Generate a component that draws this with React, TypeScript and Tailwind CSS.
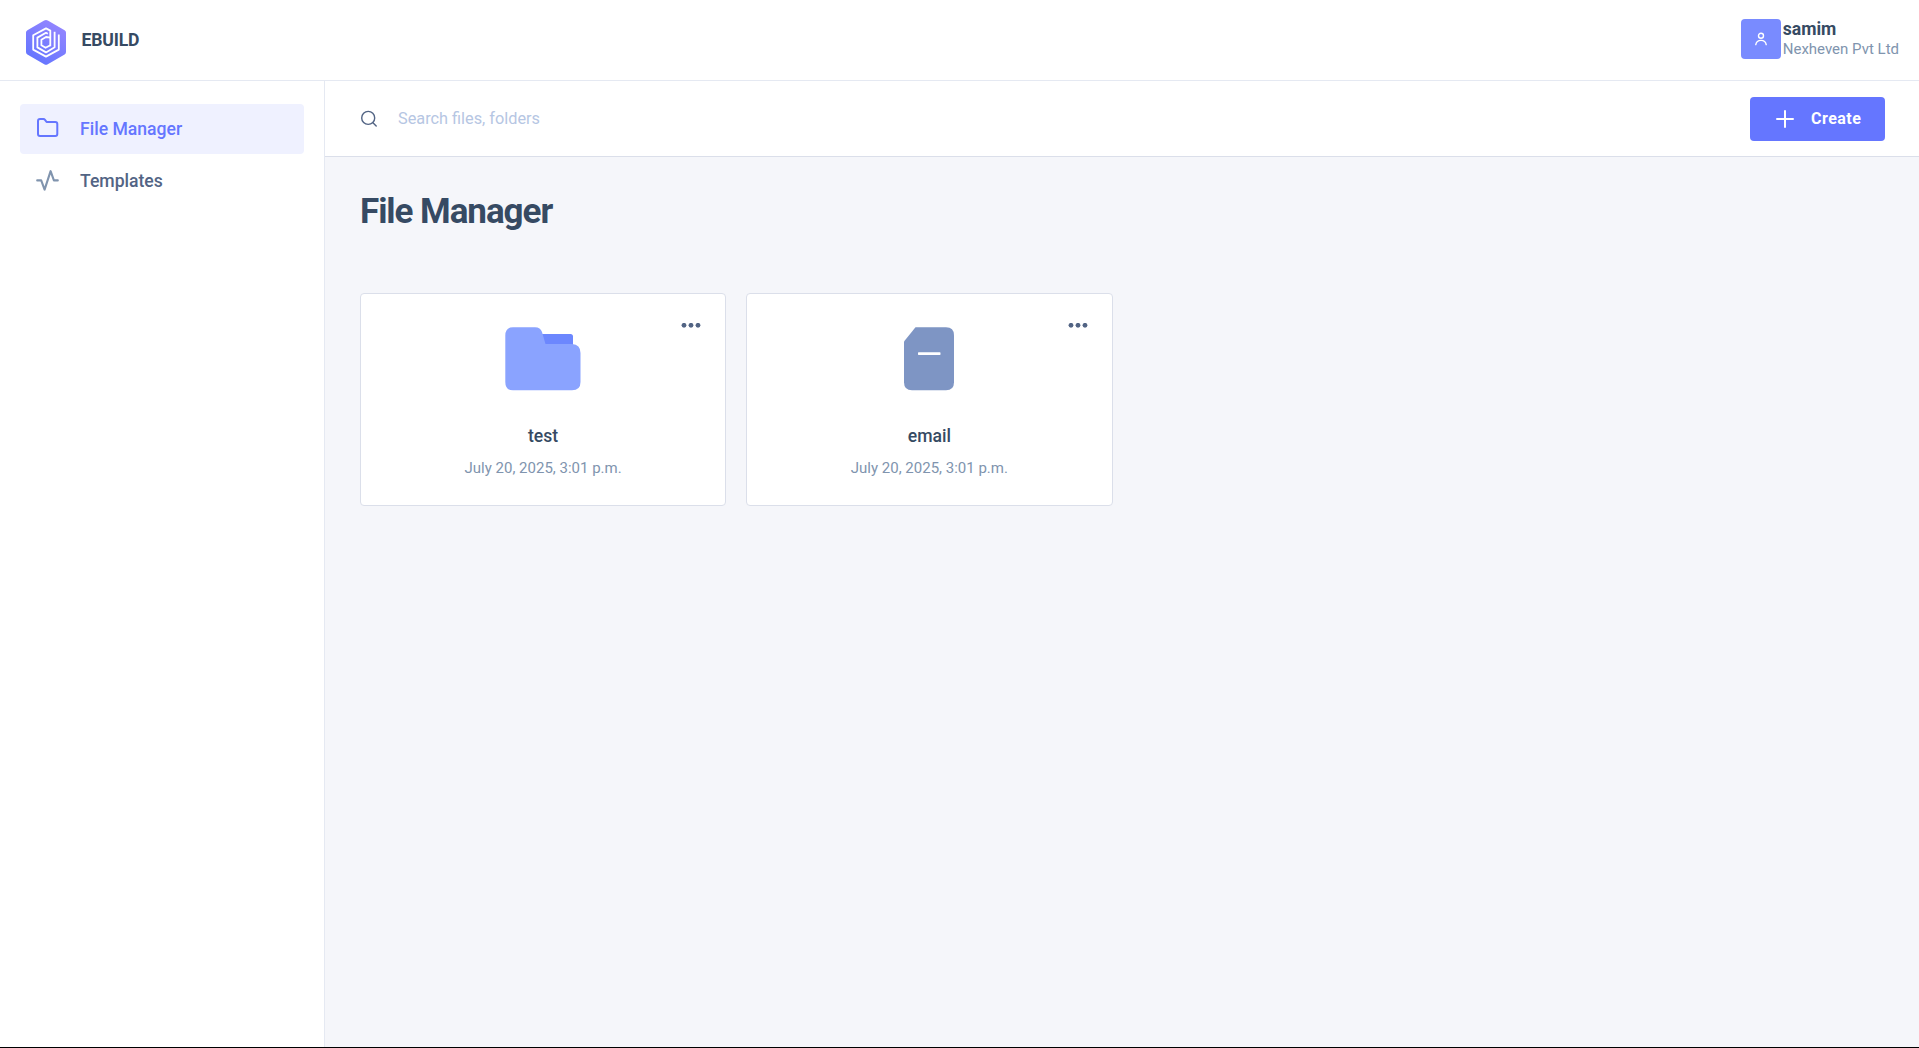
import React from "react";

function Logo() {
  return (
    <svg width="40" height="46" viewBox="0 0 40 46" fill="none">
      <defs>
        <linearGradient id="logo-fill" x1="32" y1="4" x2="8" y2="40" gradientUnits="userSpaceOnUse">
          <stop offset="0" stopColor="#9385ff" />
          <stop offset="1" stopColor="#6576ff" />
        </linearGradient>
      </defs>
      <path
        d="M18.2 0.6 Q20 -0.4 21.8 0.6 L38.6 10.2 Q40 11 40 12.6 V32 Q40 33.6 38.6 34.4 L21.8 44.2 Q20 45.2 18.2 44.2 L1.4 34.4 Q0 33.6 0 32 V12.6 Q0 11 1.4 10.2 Z"
        fill="url(#logo-fill)"
      />
      <g stroke="#fff" strokeWidth="1.8" strokeLinejoin="round">
        <path d="M24.3 26.2 V10.6 L20 8.4 L7.2 15.2 V29.6 L20 36.6 L32.8 29.6 V14.6" />
        <path d="M28.6 11.8 V27.2 L20 32.4 L11.4 27.4 V17.6 L20 12.8 L21.8 13.8" />
        <path d="M24.3 17.6 L20 17 L15.4 19.8 V25.2 L19.6 27.8 L24.3 25.2" />
      </g>
    </svg>
  );
}

function UserIcon() {
  return (
    <svg width="12" height="14" viewBox="0 0 12 14" fill="none" stroke="#fff" strokeWidth="1.4" strokeLinecap="round">
      <circle cx="6" cy="3.8" r="2.5" />
      <path d="M0.8 12.6 C1.3 9.6 3.2 8.4 6 8.4 S10.7 9.6 11.2 12.6" />
    </svg>
  );
}

function FolderOutline() {
  return (
    <svg width="24" height="24" viewBox="0 0 24 24" fill="none" stroke="currentColor" strokeWidth="2" strokeLinejoin="round">
      <path d="M3 4 a2 2 0 0 1 2 -2 h3.4 a2 2 0 0 1 1.6 .8 L11.6 5 H20.3 a2 2 0 0 1 2 2 V17 a2 2 0 0 1 -2 2 H5 a2 2 0 0 1 -2 -2 Z" />
    </svg>
  );
}

function ActivityIcon() {
  return (
    <svg width="24" height="24" viewBox="0 0 24 24" fill="none" stroke="currentColor" strokeWidth="2.1" strokeLinecap="round" strokeLinejoin="round">
      <path d="M2.2 11.4 H6.2 L9.6 20.6 L15.6 2.2 L18.9 11.4 H22.8" />
    </svg>
  );
}

function FolderArt() {
  return (
    <svg width="76" height="64" viewBox="0 0 76 64">
      <path d="M34 7 H65.5 Q68 7 68 9.5 V20 H34 Z" fill="#6c87fe" />
      <path d="M8 0.3 H30 Q35.5 0.3 37 5 L40.5 17 H67 Q75.5 17.5 75.5 26 V55 Q75.5 63.3 67 63.3 H8 Q0.3 63.3 0.3 55 V8.5 Q0.3 0.3 8 0.3 Z" fill="#8aa3ff" />
    </svg>
  );
}

function FileArt() {
  return (
    <svg width="50" height="64" viewBox="0 0 50 64">
      <path d="M11.5 0.3 H42 Q50 0.3 50 8.3 V55.3 Q50 63.3 42 63.3 H8 Q0 63.3 0 55.3 V14.5 Z" fill="#7e95c4" />
      <rect x="14" y="25.3" width="22.5" height="2.6" rx="0.6" fill="#fff" />
    </svg>
  );
}

function Card({ name, date, children }: { name: string; date: string; children: React.ReactNode }) {
  return (
    <div className="relative flex h-[213px] flex-col items-center rounded-[4px] border border-[#dbdfea] bg-white pt-[33px]">
      <button className="absolute top-[29px] right-[24px]" aria-label="More">
        <svg className="block" width="20" height="5" viewBox="0 0 20 5" fill="#526484">
          <circle cx="3" cy="2.3" r="2.4" />
          <circle cx="10" cy="2.3" r="2.4" />
          <circle cx="17" cy="2.3" r="2.4" />
        </svg>
      </button>
      <div className="h-16">{children}</div>
      <div className="mt-[31px] text-[17.6px] leading-7 font-medium text-[#364a63]">{name}</div>
      <div className="mt-[6px] text-[15px] leading-6 text-[#8094ae]">{date}</div>
    </div>
  );
}

export default function App() {
  return (
    <div className="flex h-[1048px] flex-col border-b border-black bg-[#f5f6fa] font-[Roboto,sans-serif] text-[#526484]">
      <header className="flex h-[81px] shrink-0 items-start justify-between border-b border-[#e5e9f2] bg-white pr-5 pl-[26px]">
        <div className="flex pt-5">
          <Logo />
          <span className="ml-[15.5px] pt-[7px] text-[17.6px] leading-[26px] font-bold tracking-[-0.01em] text-[#364a63]">EBUILD</span>
        </div>
        <div className="flex pt-[19px]">
          <div className="flex size-10 items-center justify-center rounded-[4px] bg-[#798bff]">
            <UserIcon />
          </div>
          <div className="ml-[2px]">
            <div className="text-[17.6px] leading-5 font-bold text-[#364a63]">samim</div>
            <div className="text-[15px] leading-5 text-[#8094ae]">Nexheven Pvt Ltd</div>
          </div>
        </div>
      </header>

      <div className="flex min-h-0 flex-1">
        <nav className="w-[325px] shrink-0 border-r border-[#e5e9f2] bg-white px-5 pt-[23px] text-[17.6px] font-medium">
          <a className="flex h-[50px] items-center rounded-[4px] bg-[#eff1ff] pl-[15px] text-[#6576ff]">
            <FolderOutline />
            <span className="ml-[21px]">File Manager</span>
          </a>
          <a className="mt-[2px] flex h-[50px] items-center pl-[15px]">
            <span className="text-[#8094ae]">
              <ActivityIcon />
            </span>
            <span className="ml-[21px]">Templates</span>
          </a>
        </nav>

        <main className="min-w-0 flex-1">
          <div className="flex h-[76px] items-center border-b border-[#dbdfea] bg-white pr-[34px] pl-9">
            <svg width="16" height="18" viewBox="0 0 16 18" fill="none" stroke="#526484" strokeWidth="1.4" strokeLinecap="round">
              <circle cx="7.2" cy="7.9" r="6.5" />
              <path d="M12.2 12.9 L15.2 15.9" />
            </svg>
            <input
              className="ml-[21px] h-6 w-[600px] pt-px text-[16.3px] outline-none placeholder:text-[#b6c6e3]"
              placeholder="Search files, folders"
            />
            <button className="ml-auto flex h-11 w-[135px] items-center rounded-[4px] bg-[#6576ff] pl-[26px] font-bold tracking-[0.03em] text-white">
              <svg width="18" height="18" viewBox="0 0 18 18" stroke="#fff" strokeWidth="2" strokeLinecap="round">
                <path d="M9 1 V17 M1 9 H17" />
              </svg>
              <span className="ml-[17px]">Create</span>
            </button>
          </div>

          <div className="pr-[34px] pl-[35px]">
            <h1 className="pt-[35px] text-[35px] leading-[40px] font-bold tracking-[-0.03em] text-[#364a63]">File Manager</h1>
            <div className="mt-[61px] grid grid-cols-4 gap-5">
              <Card name="test" date="July 20, 2025, 3:01 p.m.">
                <FolderArt />
              </Card>
              <Card name="email" date="July 20, 2025, 3:01 p.m.">
                <FileArt />
              </Card>
            </div>
          </div>
        </main>
      </div>
    </div>
  );
}
